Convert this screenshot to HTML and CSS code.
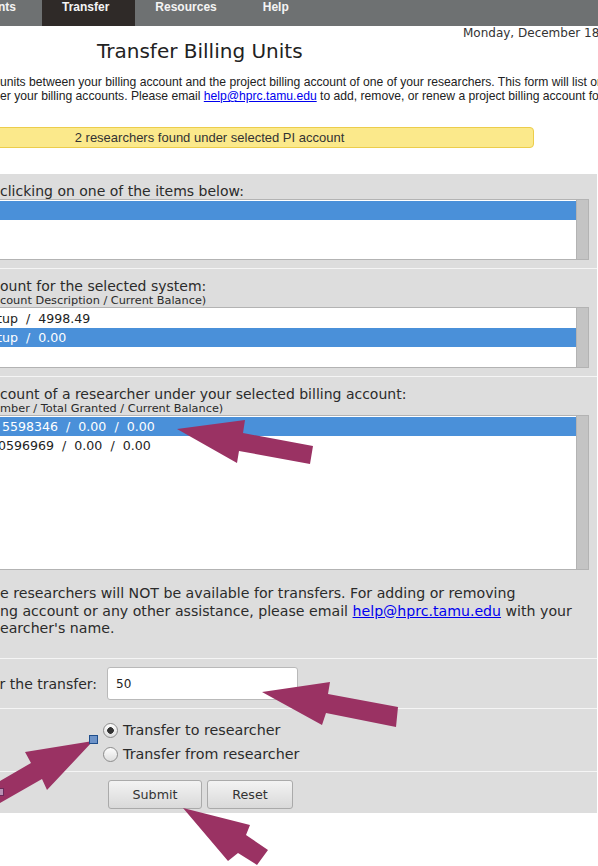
FILE: index.html
```html
<!DOCTYPE html>
<html>
<head>
<meta charset="utf-8">
<title>Transfer Billing Units</title>
<link rel="stylesheet" href="styles.css">
</head>
<body>
<nav class="topnav">
  <a class="tab tab-first" href="#">nts</a>
  <a class="tab active" href="#">Transfer</a>
  <a class="tab" href="#">Resources</a>
  <a class="tab" href="#">Help</a>
</nav>
<div class="date">Monday, December 18, 2017</div>
<h1 class="title">Transfer Billing Units</h1>
<p class="intro">units between your billing account and the project billing account of one of your researchers. This form will list only<br>er your billing accounts. Please email <a href="#">help@hprc.tamu.edu</a> to add, remove, or renew a project billing account for</p>
<div class="notice">2 researchers found under selected PI account</div>

<form class="panel">
  <section class="sect sect-list">
    <div class="label">clicking on one of the items below:</div>
    <div class="listbox lb-1">
      <div class="options">
        <div class="opt sel">&nbsp;</div>
      </div>
      <div class="scrollbar"></div>
    </div>
  </section>

  <section class="sect sect-list">
    <div class="label">ount for the selected system:</div>
    <div class="sublabel">count Description / Current Balance)</div>
    <div class="listbox lb-2">
      <div class="options">
        <div class="opt shift-l3">tup  /  4998.49</div>
        <div class="opt shift-l3 sel">tup  /  0.00</div>
      </div>
      <div class="scrollbar"></div>
    </div>
  </section>

  <section class="sect sect-list sect-last">
    <div class="label">count of a researcher under your selected billing account:</div>
    <div class="sublabel">mber / Total Granted / Current Balance)</div>
    <div class="listbox lb-3">
      <div class="options">
        <div class="opt shift-r2 sel">5598346  /  0.00  /  0.00</div>
        <div class="opt shift-l2">0596969  /  0.00  /  0.00</div>
      </div>
      <div class="scrollbar"></div>
    </div>
    <p class="note">e researchers will NOT be available for transfers. For adding or removing<br>ng account or any other assistance, please email <a href="#">help@hprc.tamu.edu</a> with your<br>earcher's name.</p>
  </section>

  <section class="sect field">
    <div class="field-label"><span>r the transfer:</span></div>
    <input class="amount" type="text" value="50">
  </section>

  <section class="sect radios">
    <label class="radio-row"><input class="radio" type="radio" name="dir" checked>Transfer to researcher</label>
    <label class="radio-row"><input class="radio" type="radio" name="dir">Transfer from researcher</label>
  </section>

  <section class="sect actions">
    <button class="btn btn-submit" type="button">Submit</button>
    <button class="btn btn-reset" type="button">Reset</button>
  </section>
</form>

<svg class="overlay" width="598" height="866" viewBox="0 0 598 866">
  <polygon points="177,429 245,420 243,433 313,446 310,464 239,451 237,463" fill="#9a3263"/>
  <polygon points="262,692 330,682 328,694 398,707 396,727 326,713 322,725" fill="#9a3263"/>
  <polygon points="93,741 25,752 31,763 0,781 0,803 42,779 47,790" fill="#9a3263"/>
  <polygon points="183,808 250,825 246,835 268,850 257,865 238,853 228,861" fill="#9a3263"/>
  <rect x="89.5" y="735.5" width="8" height="8" fill="#6d93c8" stroke="#1f4e8c" stroke-width="1"/>
  <rect x="-1.5" y="788.5" width="5" height="7" fill="#b993b4" stroke="#6b2a5a" stroke-width="1"/>
</svg>
</body>
</html>
```
FILE: styles.css
```css
* { box-sizing: border-box; }
html, body { margin: 0; padding: 0; overflow: hidden; background: #fff; }
body {
  position: relative;
  width: 598px;
  height: 866px;
  font-family: "DejaVu Sans", sans-serif;
  color: #2b2b2b;
}

.topnav {
  display: flex;
  height: 26px;
  background: #6e7172;
  font-family: "Liberation Sans", Arial, sans-serif;
  font-weight: bold;
  font-size: 12px;
  line-height: 15px;
}
.tab { color: #f4f4f4; padding: 0 26px 0 20px; text-decoration: none; }
.tab-first { padding-left: 0; margin-left: -2px; }
.tab.active { background: #2f2a28; }

.date {
  font-size: 12px;
  line-height: 14px;
  padding-left: 463px;
  white-space: nowrap;
  color: #333;
}
.title {
  margin: 0;
  font-weight: normal;
  font-size: 20px;
  line-height: 23px;
  padding-left: 97px;
  color: #222;
}
.intro {
  margin: 12px 0 0;
  font-family: "Liberation Sans", Arial, sans-serif;
  font-size: 12.15px;
  line-height: 14px;
  white-space: nowrap;
  color: #222;
}
a { color: #0000ee; }

.notice {
  margin: 24px 0 0 -115px;
  width: 649px;
  height: 21px;
  border: 1px solid #eccd4b;
  border-radius: 4px;
  background: #fbe98b;
  text-align: center;
  font-family: "Liberation Sans", Arial, sans-serif;
  font-size: 13px;
  line-height: 19px;
  color: #333;
}

.panel { margin: 26px 0 0; width: 597px; background: #dddddd; }
.sect { border-top: 1px solid #f5f5f5; }
.sect:first-child { border-top: 0; }
.sect-list { padding: 9px 0 8px; }
.sect-last { padding-bottom: 20.5px; }

.label { font-size: 14px; line-height: 16px; white-space: nowrap; }
.sublabel { font-size: 11.3px; line-height: 13px; white-space: nowrap; }

.listbox {
  display: flex;
  margin-left: -3px;
  width: 592px;
  border: 1px solid #b3b3b3;
  background: #fff;
}
.lb-1, .lb-2 { height: 61px; }
.lb-3 { height: 155px; }
.options { flex: 1; padding-top: 1px; overflow: hidden; }
.opt {
  height: 19px;
  line-height: 19px;
  font-size: 12.6px;
  padding-left: 2px;
  white-space: pre;
  color: #222;
}
.opt.sel { background: #4a90d9; color: #fff; }
.shift-l3 { text-indent: -3px; }
.shift-l2 { text-indent: -2px; }
.shift-r2 { text-indent: 2px; }
.scrollbar { width: 12px; background: #c4c4c4; border-left: 1px solid #b3b3b3; }

.note {
  margin: 15px 0 0;
  font-size: 14.15px;
  line-height: 17.5px;
  white-space: nowrap;
}

.field { display: flex; align-items: center; padding: 8px 0; }
.field-label {
  width: 97px;
  flex: none;
  display: flex;
  justify-content: flex-end;
  white-space: nowrap;
  font-size: 14px;
}
.amount {
  margin: 0 0 0 10px;
  width: 191px;
  height: 33px;
  border: 1px solid #b9b9b9;
  border-radius: 3px;
  padding: 0 0 0 8px;
  font: 12px "DejaVu Sans", sans-serif;
  color: #222;
  background: #fff;
  outline: none;
}

.radios { padding: 9px 0 5px 103px; }
.radio-row { display: flex; align-items: center; height: 24px; font-size: 14.3px; }
.radio {
  appearance: none;
  -webkit-appearance: none;
  margin: 0 5px 0 0;
  width: 15px;
  height: 15px;
  flex: none;
  border-radius: 50%;
  border: 1px solid #8c8c8c;
  background: linear-gradient(#fdfdfd, #dedede);
}
.radio:checked {
  background: radial-gradient(circle, #333 0, #333 3px, transparent 3.6px), linear-gradient(#fdfdfd, #dedede);
}

.actions { display: flex; gap: 5px; padding: 8px 0 4px 108px; }
.btn {
  height: 29px;
  border: 1px solid #aaa;
  border-radius: 3px;
  background: linear-gradient(#f3f3f3, #d9d9d9);
  font: 12.7px "DejaVu Sans", sans-serif;
  color: #333;
  padding: 0;
}
.btn-submit { width: 94px; }
.btn-reset { width: 86px; }

.overlay { position: absolute; left: 0; top: 0; pointer-events: none; }
```
